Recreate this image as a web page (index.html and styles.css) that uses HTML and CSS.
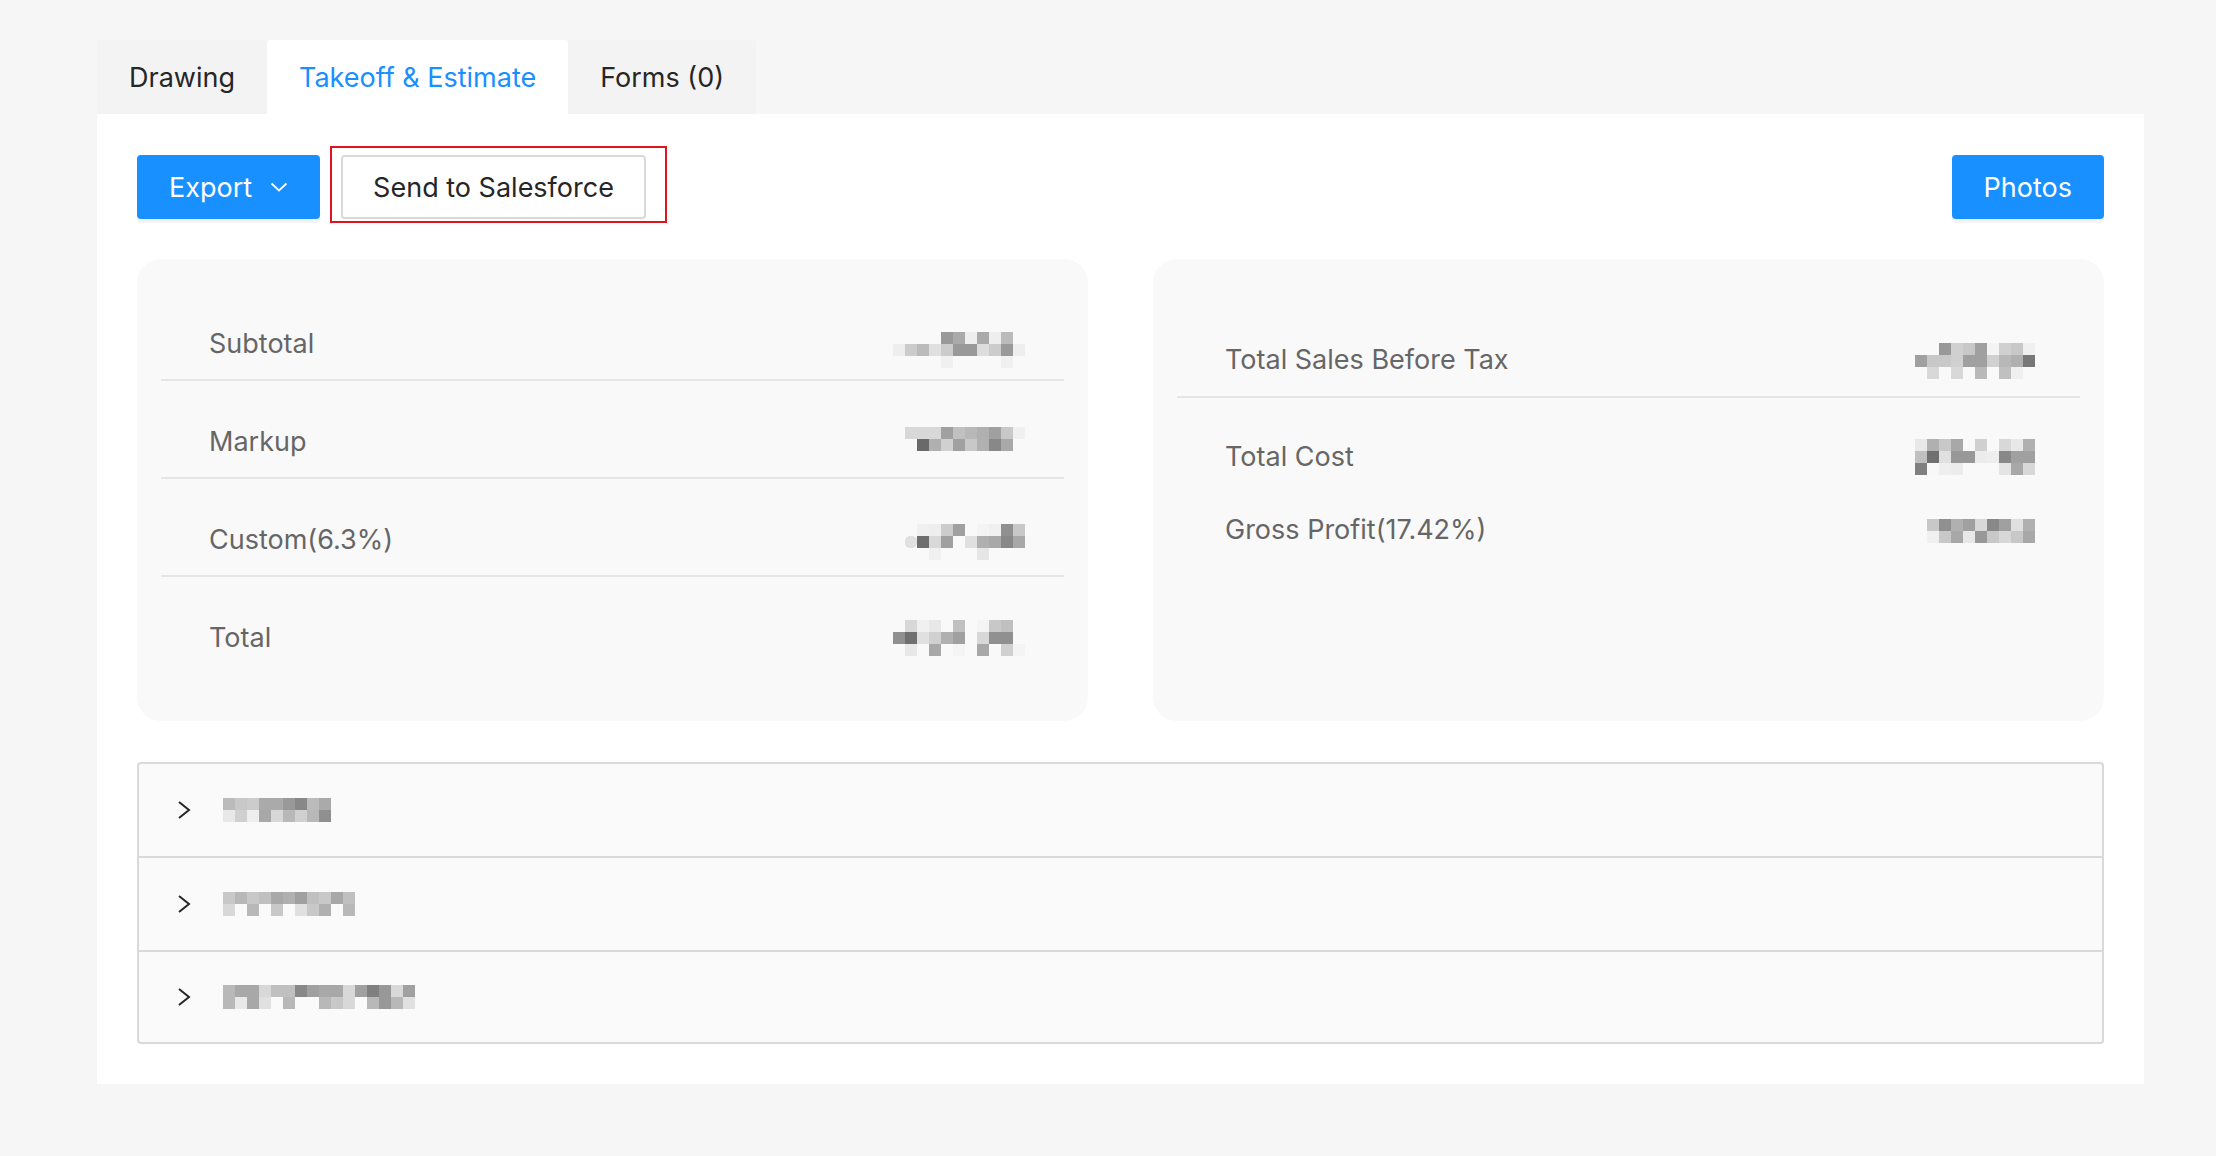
FILE: index.html
```html
<!DOCTYPE html>
<html lang="en">
<head>
<meta charset="utf-8">
<title>Takeoff &amp; Estimate</title>
<link rel="stylesheet" href="styles.css">
</head>
<body>
<div class="page">
  <div class="tabs">
    <div class="tab">Drawing</div>
    <div class="tab active">Takeoff &amp; Estimate</div>
    <div class="tab">Forms (0)</div>
  </div>
  <div class="panel">
    <div class="toolbar">
      <button class="btn btn-primary">Export
        <svg class="caret" width="18" height="10" viewBox="0 0 18 10"><path d="M1.5 1.5 L9 8.5 L16.5 1.5" fill="none" stroke="#fff" stroke-width="1.8"/></svg>
      </button>
      <div class="annot">
        <button class="btn btn-default">Send to Salesforce</button>
      </div>
      <div class="spacer"></div>
      <button class="btn btn-primary">Photos</button>
    </div>

    <div class="cards">
      <div class="card card-left">
        <div class="row">
          <span class="label">Subtotal</span>
          <svg class="mosaic" width="132" height="36" viewBox="0 0 132 36">
            <rect x="48" y="6" width="12" height="12" fill="#999"/><rect x="60" y="6" width="12" height="12" fill="#aaa"/><rect x="72" y="6" width="12" height="12" fill="#eee"/><rect x="84" y="6" width="12" height="12" fill="#aaa"/><rect x="96" y="6" width="12" height="12" fill="#eee"/><rect x="108" y="6" width="12" height="12" fill="#bbb"/>
            <rect x="0" y="18" width="12" height="12" fill="#eee"/><rect x="12" y="18" width="12" height="12" fill="#ccc"/><rect x="24" y="18" width="12" height="12" fill="#bbb"/><rect x="36" y="18" width="12" height="12" fill="#e0e0e0"/><rect x="48" y="18" width="12" height="12" fill="#ccc"/><rect x="60" y="18" width="12" height="12" fill="#999"/><rect x="72" y="18" width="12" height="12" fill="#999"/><rect x="84" y="18" width="12" height="12" fill="#ddd"/><rect x="96" y="18" width="12" height="12" fill="#ccc"/><rect x="108" y="18" width="12" height="12" fill="#999"/><rect x="120" y="18" width="12" height="12" fill="#eee"/>
            <rect x="48" y="30" width="12" height="12" fill="#f0f0f0"/><rect x="108" y="30" width="12" height="12" fill="#f0f0f0"/>
          </svg>
        </div>
        <div class="row">
          <span class="label">Markup</span>
          <svg class="mosaic" width="132" height="36" viewBox="0 0 132 36">
            <rect x="12" y="3" width="12" height="12" fill="#d8d8d8"/><rect x="24" y="3" width="12" height="12" fill="#d8d8d8"/><rect x="36" y="3" width="12" height="12" fill="#d8d8d8"/><rect x="48" y="3" width="12" height="12" fill="#a0a0a0"/><rect x="60" y="3" width="12" height="12" fill="#c0c0c0"/><rect x="72" y="3" width="12" height="12" fill="#b8b8b8"/><rect x="84" y="3" width="12" height="12" fill="#b0b0b0"/><rect x="96" y="3" width="12" height="12" fill="#a0a0a0"/><rect x="108" y="3" width="12" height="12" fill="#c8c8c8"/><rect x="120" y="3" width="12" height="12" fill="#f0f0f0"/>
            <rect x="24" y="15" width="12" height="12" fill="#6a6a6a"/><rect x="36" y="15" width="12" height="12" fill="#b0b0b0"/><rect x="48" y="15" width="12" height="12" fill="#d0d0d0"/><rect x="60" y="15" width="12" height="12" fill="#a0a0a0"/><rect x="72" y="15" width="12" height="12" fill="#c8c8c8"/><rect x="84" y="15" width="12" height="12" fill="#b0b0b0"/><rect x="96" y="15" width="12" height="12" fill="#888"/><rect x="108" y="15" width="12" height="12" fill="#a8a8a8"/>
          </svg>
        </div>
        <div class="row">
          <span class="label">Custom(6.3%)</span>
          <svg class="mosaic" width="132" height="36" viewBox="0 0 132 36">
            <rect x="24" y="2" width="12" height="12" fill="#f0f0f0"/><rect x="36" y="2" width="12" height="12" fill="#eee"/><rect x="48" y="2" width="12" height="12" fill="#ccc"/><rect x="60" y="2" width="12" height="12" fill="#a0a0a0"/><rect x="84" y="2" width="12" height="12" fill="#f4f4f4"/><rect x="96" y="2" width="12" height="12" fill="#f0f0f0"/><rect x="108" y="2" width="12" height="12" fill="#909090"/><rect x="120" y="2" width="12" height="12" fill="#c8c8c8"/>
            <rect x="12" y="14" width="12" height="12" rx="5" fill="#e0e0e0"/><rect x="24" y="14" width="12" height="12" fill="#6e6e6e"/><rect x="36" y="14" width="12" height="12" fill="#d8d8d8"/><rect x="48" y="14" width="12" height="12" fill="#a0a0a0"/><rect x="72" y="14" width="12" height="12" fill="#e0e0e0"/><rect x="84" y="14" width="12" height="12" fill="#b0b0b0"/><rect x="96" y="14" width="12" height="12" fill="#a8a8a8"/><rect x="108" y="14" width="12" height="12" fill="#888"/><rect x="120" y="14" width="12" height="12" fill="#a8a8a8"/>
            <rect x="36" y="26" width="12" height="12" fill="#f0f0f0"/><rect x="84" y="26" width="12" height="12" fill="#e6e6e6"/>
          </svg>
        </div>
        <div class="row">
          <span class="label">Total</span>
          <svg class="mosaic" width="132" height="36" viewBox="0 0 132 36">
            <rect x="12" y="0" width="12" height="12" fill="#d8d8d8"/><rect x="24" y="0" width="12" height="12" fill="#f0f0f0"/><rect x="36" y="0" width="12" height="12" fill="#e8e8e8"/><rect x="60" y="0" width="12" height="12" fill="#c0c0c0"/><rect x="84" y="0" width="12" height="12" fill="#f4f4f4"/><rect x="96" y="0" width="12" height="12" fill="#c8c8c8"/><rect x="108" y="0" width="12" height="12" fill="#c0c0c0"/>
            <rect x="0" y="12" width="12" height="12" fill="#909090"/><rect x="12" y="12" width="12" height="12" fill="#707070"/><rect x="24" y="12" width="12" height="12" fill="#e0e0e0"/><rect x="36" y="12" width="12" height="12" fill="#d0d0d0"/><rect x="48" y="12" width="12" height="12" fill="#b0b0b0"/><rect x="60" y="12" width="12" height="12" fill="#a0a0a0"/><rect x="84" y="12" width="12" height="12" fill="#d8d8d8"/><rect x="96" y="12" width="12" height="12" fill="#909090"/><rect x="108" y="12" width="12" height="12" fill="#909090"/>
            <rect x="12" y="24" width="12" height="12" fill="#e8e8e8"/><rect x="36" y="24" width="12" height="12" fill="#a8a8a8"/><rect x="60" y="24" width="12" height="12" fill="#f4f4f4"/><rect x="84" y="24" width="12" height="12" fill="#a8a8a8"/><rect x="108" y="24" width="12" height="12" fill="#d0d0d0"/><rect x="120" y="24" width="12" height="12" fill="#f4f4f4"/>
          </svg>
        </div>
      </div>

      <div class="card card-right">
        <div class="rsec rsec-top">
          <div class="rrow">
            <span class="label">Total Sales Before Tax</span>
            <svg class="mosaic" width="120" height="36" viewBox="0 0 120 36">
              <rect x="24" y="1" width="12" height="12" fill="#989898"/><rect x="36" y="1" width="12" height="12" fill="#d0d0d0"/><rect x="48" y="1" width="12" height="12" fill="#c8c8c8"/><rect x="60" y="1" width="12" height="12" fill="#a0a0a0"/><rect x="72" y="1" width="12" height="12" fill="#f4f4f4"/><rect x="84" y="1" width="12" height="12" fill="#d0d0d0"/><rect x="96" y="1" width="12" height="12" fill="#c8c8c8"/><rect x="108" y="1" width="12" height="12" fill="#f0f0f0"/>
              <rect x="0" y="13" width="12" height="12" fill="#a0a0a0"/><rect x="12" y="13" width="12" height="12" fill="#c8c8c8"/><rect x="24" y="13" width="12" height="12" fill="#c8c8c8"/><rect x="36" y="13" width="12" height="12" fill="#d0d0d0"/><rect x="48" y="13" width="12" height="12" fill="#a0a0a0"/><rect x="60" y="13" width="12" height="12" fill="#a0a0a0"/><rect x="72" y="13" width="12" height="12" fill="#d0d0d0"/><rect x="84" y="13" width="12" height="12" fill="#b8b8b8"/><rect x="96" y="13" width="12" height="12" fill="#b0b0b0"/><rect x="108" y="13" width="12" height="12" fill="#787878"/>
              <rect x="12" y="25" width="12" height="12" fill="#d8d8d8"/><rect x="36" y="25" width="12" height="12" fill="#d8d8d8"/><rect x="60" y="25" width="12" height="12" fill="#b8b8b8"/><rect x="84" y="25" width="12" height="12" fill="#c0c0c0"/><rect x="96" y="25" width="12" height="12" fill="#f0f0f0"/>
            </svg>
          </div>
        </div>
        <div class="rsec rsec-bottom">
          <div class="rrow">
            <span class="label">Total Cost</span>
            <svg class="mosaic" width="120" height="36" viewBox="0 0 120 36">
              <rect x="0" y="0" width="12" height="12" fill="#e8e8e8"/><rect x="12" y="0" width="12" height="12" fill="#b0b0b0"/><rect x="24" y="0" width="12" height="12" fill="#c8c8c8"/><rect x="36" y="0" width="12" height="12" fill="#a8a8a8"/><rect x="60" y="0" width="12" height="12" fill="#d0d0d0"/><rect x="84" y="0" width="12" height="12" fill="#d8d8d8"/><rect x="96" y="0" width="12" height="12" fill="#e8e8e8"/><rect x="108" y="0" width="12" height="12" fill="#b0b0b0"/>
              <rect x="0" y="12" width="12" height="12" fill="#c0c0c0"/><rect x="12" y="12" width="12" height="12" fill="#707070"/><rect x="24" y="12" width="12" height="12" fill="#e0e0e0"/><rect x="36" y="12" width="12" height="12" fill="#989898"/><rect x="48" y="12" width="12" height="12" fill="#989898"/><rect x="60" y="12" width="12" height="12" fill="#ececec"/><rect x="72" y="12" width="12" height="12" fill="#eeeeee"/><rect x="84" y="12" width="12" height="12" fill="#888"/><rect x="96" y="12" width="12" height="12" fill="#a0a0a0"/><rect x="108" y="12" width="12" height="12" fill="#a0a0a0"/>
              <rect x="0" y="24" width="12" height="12" fill="#808080"/><rect x="12" y="24" width="12" height="12" fill="#f8f8f8"/><rect x="24" y="24" width="12" height="12" fill="#eeeeee"/><rect x="36" y="24" width="12" height="12" fill="#ececec"/><rect x="84" y="24" width="12" height="12" fill="#e4e4e4"/><rect x="96" y="24" width="12" height="12" fill="#a8a8a8"/><rect x="108" y="24" width="12" height="12" fill="#d8d8d8"/>
            </svg>
          </div>
          <div class="rrow">
            <span class="label">Gross Profit(17.42%)</span>
            <svg class="mosaic" width="120" height="36" viewBox="0 0 120 36">
              <rect x="12" y="7" width="12" height="12" fill="#c8c8c8"/><rect x="24" y="7" width="12" height="12" fill="#909090"/><rect x="36" y="7" width="12" height="12" fill="#b0b0b0"/><rect x="48" y="7" width="12" height="12" fill="#a0a0a0"/><rect x="60" y="7" width="12" height="12" fill="#d8d8d8"/><rect x="72" y="7" width="12" height="12" fill="#888"/><rect x="84" y="7" width="12" height="12" fill="#a0a0a0"/><rect x="96" y="7" width="12" height="12" fill="#e0e0e0"/><rect x="108" y="7" width="12" height="12" fill="#b0b0b0"/>
              <rect x="12" y="19" width="12" height="12" fill="#f0f0f0"/><rect x="24" y="19" width="12" height="12" fill="#c8c8c8"/><rect x="36" y="19" width="12" height="12" fill="#a8a8a8"/><rect x="48" y="19" width="12" height="12" fill="#e8e8e8"/><rect x="60" y="19" width="12" height="12" fill="#989898"/><rect x="72" y="19" width="12" height="12" fill="#c8c8c8"/><rect x="84" y="19" width="12" height="12" fill="#d8d8d8"/><rect x="96" y="19" width="12" height="12" fill="#c8c8c8"/><rect x="108" y="19" width="12" height="12" fill="#a8a8a8"/>
            </svg>
          </div>
        </div>
      </div>
    </div>

    <div class="collapse">
      <div class="item">
        <svg class="chev" width="14" height="20" viewBox="0 0 14 20"><path d="M2 2 L12 10 L2 18" fill="none" stroke="#262626" stroke-width="2"/></svg>
        <svg class="mosaic" width="108" height="24" viewBox="0 0 108 24">
          <rect x="0" y="0" width="12" height="12" fill="#bbb"/><rect x="12" y="0" width="12" height="12" fill="#c8c8c8"/><rect x="24" y="0" width="12" height="12" fill="#ccc"/><rect x="36" y="0" width="12" height="12" fill="#aaa"/><rect x="48" y="0" width="12" height="12" fill="#aaa"/><rect x="60" y="0" width="12" height="12" fill="#999"/><rect x="72" y="0" width="12" height="12" fill="#888"/><rect x="84" y="0" width="12" height="12" fill="#bbb"/><rect x="96" y="0" width="12" height="12" fill="#aaa"/>
          <rect x="0" y="12" width="12" height="12" fill="#e8e8e8"/><rect x="12" y="12" width="12" height="12" fill="#d0d0d0"/><rect x="24" y="12" width="12" height="12" fill="#eee"/><rect x="36" y="12" width="12" height="12" fill="#a8a8a8"/><rect x="48" y="12" width="12" height="12" fill="#d8d8d8"/><rect x="60" y="12" width="12" height="12" fill="#b8b8b8"/><rect x="72" y="12" width="12" height="12" fill="#d0d0d0"/><rect x="84" y="12" width="12" height="12" fill="#b8b8b8"/><rect x="96" y="12" width="12" height="12" fill="#909090"/>
        </svg>
      </div>
      <div class="item">
        <svg class="chev" width="14" height="20" viewBox="0 0 14 20"><path d="M2 2 L12 10 L2 18" fill="none" stroke="#262626" stroke-width="2"/></svg>
        <svg class="mosaic" width="132" height="24" viewBox="0 0 132 24">
          <rect x="0" y="0" width="12" height="12" fill="#c8c8c8"/><rect x="12" y="0" width="12" height="12" fill="#b8b8b8"/><rect x="24" y="0" width="12" height="12" fill="#c8c8c8"/><rect x="36" y="0" width="12" height="12" fill="#c0c0c0"/><rect x="48" y="0" width="12" height="12" fill="#a8a8a8"/><rect x="60" y="0" width="12" height="12" fill="#b0b0b0"/><rect x="72" y="0" width="12" height="12" fill="#a0a0a0"/><rect x="84" y="0" width="12" height="12" fill="#c0c0c0"/><rect x="96" y="0" width="12" height="12" fill="#c8c8c8"/><rect x="108" y="0" width="12" height="12" fill="#a8a8a8"/><rect x="120" y="0" width="12" height="12" fill="#c0c0c0"/>
          <rect x="0" y="12" width="12" height="12" fill="#d8d8d8"/><rect x="24" y="12" width="12" height="12" fill="#b8b8b8"/><rect x="48" y="12" width="12" height="12" fill="#c8c8c8"/><rect x="72" y="12" width="12" height="12" fill="#e0e0e0"/><rect x="84" y="12" width="12" height="12" fill="#c8c8c8"/><rect x="96" y="12" width="12" height="12" fill="#b0b0b0"/><rect x="120" y="12" width="12" height="12" fill="#b8b8b8"/>
        </svg>
      </div>
      <div class="item">
        <svg class="chev" width="14" height="20" viewBox="0 0 14 20"><path d="M2 2 L12 10 L2 18" fill="none" stroke="#262626" stroke-width="2"/></svg>
        <svg class="mosaic" width="192" height="24" viewBox="0 0 192 24">
          <rect x="0" y="0" width="12" height="12" fill="#b8b8b8"/><rect x="12" y="0" width="12" height="12" fill="#a8a8a8"/><rect x="24" y="0" width="12" height="12" fill="#a8a8a8"/><rect x="36" y="0" width="12" height="12" fill="#d8d8d8"/><rect x="48" y="0" width="12" height="12" fill="#c0c0c0"/><rect x="60" y="0" width="12" height="12" fill="#c0c0c0"/><rect x="72" y="0" width="12" height="12" fill="#888"/><rect x="84" y="0" width="12" height="12" fill="#a0a0a0"/><rect x="96" y="0" width="12" height="12" fill="#a8a8a8"/><rect x="108" y="0" width="12" height="12" fill="#a8a8a8"/><rect x="120" y="0" width="12" height="12" fill="#d8d8d8"/><rect x="132" y="0" width="12" height="12" fill="#a0a0a0"/><rect x="144" y="0" width="12" height="12" fill="#808080"/><rect x="156" y="0" width="12" height="12" fill="#989898"/><rect x="168" y="0" width="12" height="12" fill="#d8d8d8"/><rect x="180" y="0" width="12" height="12" fill="#a0a0a0"/>
          <rect x="0" y="12" width="12" height="12" fill="#b8b8b8"/><rect x="12" y="12" width="12" height="12" fill="#e8e8e8"/><rect x="24" y="12" width="12" height="12" fill="#a8a8a8"/><rect x="36" y="12" width="12" height="12" fill="#e0e0e0"/><rect x="60" y="12" width="12" height="12" fill="#b8b8b8"/><rect x="96" y="12" width="12" height="12" fill="#b8b8b8"/><rect x="108" y="12" width="12" height="12" fill="#c8c8c8"/><rect x="120" y="12" width="12" height="12" fill="#d8d8d8"/><rect x="144" y="12" width="12" height="12" fill="#b8b8b8"/><rect x="156" y="12" width="12" height="12" fill="#989898"/><rect x="168" y="12" width="12" height="12" fill="#b8b8b8"/><rect x="180" y="12" width="12" height="12" fill="#e0e0e0"/>
        </svg>
      </div>
    </div>
  </div>
</div>
</body>
</html>
```

FILE: styles.css
```css
* { box-sizing: border-box; }

body {
  margin: 0;
  background: #f6f6f6;
  font-family: Inter, "Noto Sans", sans-serif;
  color: #262626;
}

.page {
  padding: 40px 72px 72px 97px;
}

/* Tabs */
.tabs {
  display: flex;
  height: 74px;
}

.tab {
  display: flex;
  align-items: center;
  padding: 0 32px;
  font-size: 27px;
  color: #262626;
  background: #f3f3f3;
  border-radius: 4px 4px 0 0;
}

.tab.active {
  background: #fff;
  color: #1890ff;
}

/* Panel */
.panel {
  background: #fff;
  padding: 41px 40px 40px;
}

.toolbar {
  display: flex;
  align-items: center;
  height: 64px;
}

.spacer { flex: 1; }

.btn {
  display: flex;
  align-items: center;
  height: 64px;
  padding: 0 30px;
  font-family: inherit;
  font-size: 27px;
  border-radius: 4px;
  cursor: pointer;
}

.btn-primary {
  background: #1890ff;
  border: 2px solid #1890ff;
  color: #fff;
  box-shadow: 0 4px 0 rgba(0, 0, 0, 0.045);
}

.btn-default {
  background: #fff;
  border: 2px solid #d9d9d9;
  color: #262626;
  box-shadow: 0 4px 0 rgba(0, 0, 0, 0.015);
}

.caret {
  margin-left: 18px;
}

.annot {
  position: relative;
  margin-left: 21px;
}

.annot::after {
  content: "";
  position: absolute;
  left: -11px;
  top: -9px;
  right: -21px;
  bottom: -4px;
  border: 2px solid #e0141e;
  pointer-events: none;
}

/* Summary cards */
.cards {
  display: grid;
  grid-template-columns: 1fr 1fr;
  gap: 65px;
  margin-top: 40px;
}

.card {
  background: #f9f9f9;
  border-radius: 24px;
  padding: 24px 24px 48px;
}

.row {
  display: flex;
  justify-content: space-between;
  align-items: center;
  height: 98px;
  padding: 47px 39px 21px 48px;
  border-bottom: 2px solid #e5e5e5;
}

.row:last-child {
  height: 96px;
  border-bottom: 0;
}

.label {
  font-size: 27px;
  line-height: 28px;
  color: #666;
}

.mosaic {
  display: block;
  overflow: visible;
  shape-rendering: crispEdges;
}

.row .mosaic,
.rrow .mosaic {
  margin: -4px 0;
}

.rsec-top {
  padding: 63px 45px 22px 48px;
  border-bottom: 2px solid #e5e5e5;
}

.rsec-bottom {
  display: flex;
  flex-direction: column;
  gap: 45px;
  padding: 45px 45px 0 48px;
}

.rrow {
  display: flex;
  justify-content: space-between;
  align-items: center;
  height: 28px;
}

/* Collapse */
.collapse {
  margin-top: 41px;
  border: 2px solid #d9d9d9;
  border-radius: 4px;
  background: #fafafa;
}

.item {
  display: flex;
  align-items: center;
  gap: 32px;
  height: 94px;
  padding-left: 38px;
  border-bottom: 2px solid #d9d9d9;
}

.item:last-child {
  height: 90px;
  border-bottom: 0;
}

.chev { display: block; }
```
